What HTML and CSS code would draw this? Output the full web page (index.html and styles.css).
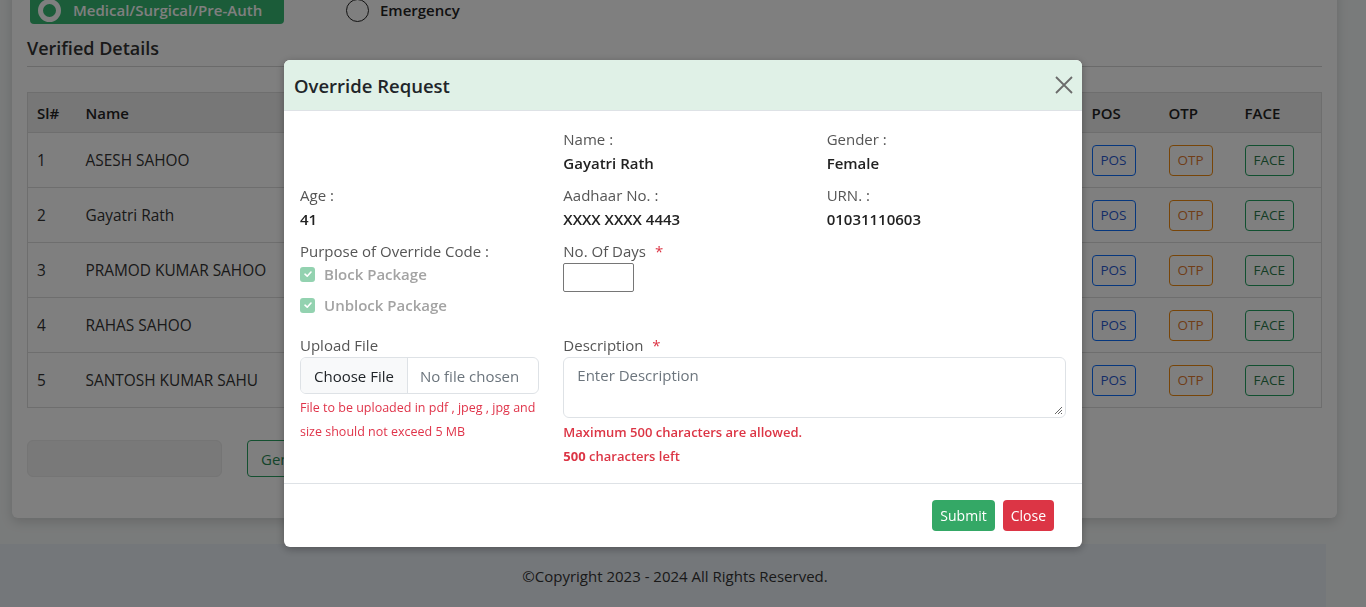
FILE: index.html
```html
<!DOCTYPE html>
<html lang="en">
<head>
<meta charset="utf-8">
<title>Override Request</title>
<link rel="stylesheet" href="styles.css">
</head>
<body>
<div class="page">
  <div class="card">
    <div class="type-row">
      <div class="type-pill">
        <span class="radio radio-on"></span>
        <span>Medical/Surgical/Pre-Auth</span>
      </div>
      <div class="type-opt">
        <span class="radio radio-off"></span>
        <span>Emergency</span>
      </div>
    </div>
    <h2 class="section-title">Verified Details</h2>
    <table class="grid">
      <colgroup>
        <col class="c-sl"><col class="c-name"><col><col class="c-pos"><col class="c-otp"><col class="c-face">
      </colgroup>
      <thead>
        <tr><th>Sl#</th><th>Name</th><th>Relation</th><th>POS</th><th>OTP</th><th>FACE</th></tr>
      </thead>
      <tbody>
        <tr><td>1</td><td>ASESH SAHOO</td><td></td><td><span class="ob ob-blue">POS</span></td><td><span class="ob ob-orange">OTP</span></td><td><span class="ob ob-green">FACE</span></td></tr>
        <tr><td>2</td><td>Gayatri Rath</td><td></td><td><span class="ob ob-blue">POS</span></td><td><span class="ob ob-orange">OTP</span></td><td><span class="ob ob-green">FACE</span></td></tr>
        <tr><td>3</td><td>PRAMOD KUMAR SAHOO</td><td></td><td><span class="ob ob-blue">POS</span></td><td><span class="ob ob-orange">OTP</span></td><td><span class="ob ob-green">FACE</span></td></tr>
        <tr><td>4</td><td>RAHAS SAHOO</td><td></td><td><span class="ob ob-blue">POS</span></td><td><span class="ob ob-orange">OTP</span></td><td><span class="ob ob-green">FACE</span></td></tr>
        <tr><td>5</td><td>SANTOSH KUMAR SAHU</td><td></td><td><span class="ob ob-blue">POS</span></td><td><span class="ob ob-orange">OTP</span></td><td><span class="ob ob-green">FACE</span></td></tr>
      </tbody>
    </table>
    <div class="bottom-row">
      <div class="disabled-input"></div>
      <button class="gen-btn">Generate Override Code</button>
    </div>
  </div>
  <footer class="site-footer">©Copyright 2023 - 2024 All Rights Reserved.</footer>
</div>

<div class="backdrop">
  <div class="modal">
    <div class="modal-header">
      <h3 class="modal-title">Override Request</h3>
      <svg class="close-x" width="20" height="20" viewBox="0 0 20 20"><path d="M2 2 L18 18 M18 2 L2 18" stroke="#6b6b6b" stroke-width="1.8" fill="none"/></svg>
    </div>
    <div class="modal-body">
      <div class="row">
        <div class="col"></div>
        <div class="col"><div class="lbl">Name :</div><div class="val">Gayatri Rath</div></div>
        <div class="col"><div class="lbl">Gender :</div><div class="val">Female</div></div>
      </div>
      <div class="row">
        <div class="col"><div class="lbl">Age :</div><div class="val">41</div></div>
        <div class="col"><div class="lbl">Aadhaar No. :</div><div class="val">XXXX XXXX 4443</div></div>
        <div class="col"><div class="lbl">URN. :</div><div class="val">01031110603</div></div>
      </div>
      <div class="row row-purpose">
        <div class="col">
          <div class="lbl">Purpose of Override Code :</div>
          <div class="check check-first"><span class="cbox"><svg width="10" height="10" viewBox="0 0 10 10"><path d="M2 5.2 L4.2 7.2 L8 3" stroke="#fff" stroke-width="1.6" fill="none" stroke-linecap="round" stroke-linejoin="round"/></svg></span><span>Block Package</span></div>
          <div class="check"><span class="cbox"><svg width="10" height="10" viewBox="0 0 10 10"><path d="M2 5.2 L4.2 7.2 L8 3" stroke="#fff" stroke-width="1.6" fill="none" stroke-linecap="round" stroke-linejoin="round"/></svg></span><span>Unblock Package</span></div>
        </div>
        <div class="col">
          <div class="lbl">No. Of Days <span class="req">*</span></div>
          <div class="days-input"></div>
        </div>
        <div class="col"></div>
      </div>
      <div class="row">
        <div class="col">
          <div class="lbl">Upload File</div>
          <div class="file-input"><span class="file-btn">Choose File</span><span class="file-name">No file chosen</span></div>
          <div class="help">File to be uploaded in pdf , jpeg , jpg and size should not exceed 5 MB</div>
        </div>
        <div class="col col-2">
          <div class="lbl">Description <span class="req">*</span></div>
          <div class="textarea"><span class="ph">Enter Description</span>
            <svg class="grip" width="9" height="9" viewBox="0 0 9 9"><path d="M8 1 L1 8 M8 4 L4 8 M8 7 L7 8" stroke="#555" stroke-width="0.9"/></svg>
          </div>
          <div class="warn">Maximum 500 characters are allowed.</div>
          <div class="left"><b>500</b> characters left</div>
        </div>
      </div>
    </div>
    <div class="modal-footer">
      <button class="btn btn-submit">Submit</button>
      <button class="btn btn-close">Close</button>
    </div>
  </div>
</div>
</body>
</html>
```

FILE: styles.css
```css
* { box-sizing: border-box; }
html, body { margin: 0; padding: 0; }
body {
  font-family: "Open Sans", "Noto Sans", sans-serif;
  font-size: 15px;
  color: #212529;
  background: #f3f6f6;
  height: 607px;
  overflow: hidden;
}
.page { margin-top: -14px; }
.card {
  margin: 0 29px 0 12px;
  background: #fff;
  border-radius: 0 0 6px 6px;
  padding: 0 15px 41px;
  box-shadow: 0 4px 12px rgba(0,0,0,0.15);
}
.type-row { display: flex; align-items: center; gap: 62px; padding-left: 3px; }
.type-pill {
  display: flex; align-items: center; gap: 12px;
  width: 254px; height: 38px; padding: 10px 0 0 8px;
  background: #36b872;
  border-radius: 0 0 4px 4px;
  color: #fff; font-weight: 600; font-size: 15px;
}
.type-opt { display: flex; align-items: center; gap: 11px; padding-top: 10px; font-weight: 600; font-size: 15px; color: #222; }
.radio { width: 23px; height: 23px; border-radius: 50%; display: inline-block; }
.radio-on { border: 5px solid #fff; background: #36b872; box-shadow: inset 0 0 0 3px #36b872; }
.radio-off { border: 1.5px solid #222; background: #fff; }
.section-title {
  margin: 0; padding: 12px 0 6px;
  font-size: 18px; font-weight: 600; color: #333;
  border-bottom: 1px solid #d4d4d4;
}
.grid {
  width: 100%; margin-top: 25px;
  border-collapse: collapse; table-layout: fixed;
  border: 1px solid #dcdcdc;
}
.c-sl { width: 49px; }
.c-name { width: 300px; }
.c-pos { width: 77px; }
.c-otp { width: 76px; }
.c-face { width: 86px; }
.grid th {
  background: #eeeeee; text-align: left; font-weight: 600;
  height: 40px; padding: 0 9px; font-size: 15px; color: #222;
}
.grid td {
  height: 55px; padding: 0 9px; font-size: 15.4px; color: #333;
  border-top: 1px solid #dcdcdc;
}
.ob {
  display: inline-flex; align-items: center; justify-content: center;
  height: 31px; padding: 0 8px; border-radius: 4px; font-size: 13.5px;
  border: 1px solid;
}
.ob-blue { color: #2a5bd0; border-color: #0d6efd; }
.ob-orange { color: #e07a30; border-color: #f08a10; }
.ob-green { color: #2a7a4a; border-color: #22a060; }
.bottom-row { display: flex; gap: 25px; margin-top: 32px; }
.disabled-input { width: 195px; height: 37px; background: #f2f2f2; border: 1px solid #eaeaea; border-radius: 6px; }
.gen-btn {
  height: 37px; padding: 0 13px; border: 1px solid #28a060; border-radius: 4px;
  background: #fff; color: #2a8a55; font-family: inherit; font-size: 15px;
}
.site-footer {
  margin-top: 26px; width: 1326px; height: 70px;
  background: #e8eef5; color: #333; font-size: 15px;
  text-align: center; padding: 22px 0 0 24px;
}

.backdrop {
  position: fixed; inset: 0;
  background: rgba(0,0,0,0.5);
  display: flex; justify-content: center; align-items: flex-start;
  padding-top: 60px;
}
.modal {
  width: 798px; background: #fff; border-radius: 6px;
  box-shadow: 0 2px 8px rgba(0,0,0,0.3);
}
.modal-header {
  height: 51px; display: flex; align-items: center; justify-content: space-between;
  padding: 0 8px 0 10px;
  background: #e0f1e7; border-bottom: 1px solid #dee2e6;
  border-radius: 6px 6px 0 0;
}
.modal-title { margin: 0; font-size: 18.5px; font-weight: 600; color: #212529; }
.close-x { display: block; }
.modal-body { padding: 16px 4px 15px 4px; }
.row { display: flex; }
.col { width: 263.33px; padding: 0 12px; }
.col-2 { width: 526.67px; }
.lbl { font-size: 15px; line-height: 24px; color: #555; }
.val { font-size: 15px; line-height: 24px; font-weight: 600; color: #222; margin-bottom: 8px; }
.req { color: #dc3545; margin-left: 5px; }
.row-purpose { margin-bottom: 16px; }
.check { display: flex; align-items: center; gap: 9px; line-height: 24px; font-size: 15px; font-weight: 600; color: #a3a3a3; margin-top: 7px; }
.check-first { margin-top: -1px; }
.cbox {
  width: 15px; height: 15px; border-radius: 3px; background: #93d2b0;
  display: inline-flex; align-items: center; justify-content: center;
}
.days-input { width: 71px; height: 29px; border: 1px solid #767676; border-radius: 2px; }
.file-input {
  display: flex; align-items: stretch; height: 37px;
  border: 1px solid #dee2e6; border-radius: 6px; overflow: hidden;
  font-size: 15px;
}
.file-btn { display: flex; align-items: center; padding: 0 13px; background: #f8f9fa; border-right: 1px solid #dee2e6; color: #212529; }
.file-name { display: flex; align-items: center; padding: 0 12px; color: #6c757d; }
.help { color: #e0344a; font-size: 12.5px; line-height: 24px; margin-top: 2px; }
.textarea {
  position: relative; height: 61px; border: 1px solid #dee2e6; border-radius: 6px;
  padding: 7px 13px; font-size: 15px;
}
.ph { color: #6c757d; }
.grip { position: absolute; right: 2px; bottom: 2px; }
.warn { color: #dc3545; font-size: 13px; font-weight: 600; line-height: 24px; margin-top: 2px; }
.left { color: #dc3545; font-size: 13px; line-height: 24px; font-weight: 600; }
.left b { font-weight: 700; }
.modal-footer {
  border-top: 1px solid #dee2e6; height: 64px;
  display: flex; justify-content: flex-end; align-items: center; gap: 8px;
  padding: 0 28px 0 0;
}
.btn {
  height: 31px; border: none; border-radius: 4px; color: #fff;
  font-family: inherit; font-size: 14px; padding: 0 8px;
}
.btn-submit { background: #34a866; }
.btn-close { background: #dc3545; }
```
